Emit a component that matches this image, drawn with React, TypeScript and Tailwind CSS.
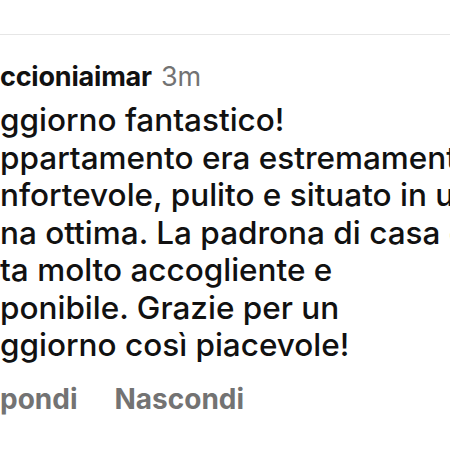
import React from 'react';

const lines = [
  'Soggiorno fantastico!',
  "L'appartamento era estremamente",
  'confortevole, pulito e situato in una',
  'zona ottima. La padrona di casa è',
  'stata molto accogliente e',
  'disponibile. Grazie per un',
  'soggiorno così piacevole!',
];

// the screenshot is cropped on the left, so each line loses its first letters
const cut = [2, 3, 2, 2, 3, 3, 2];

export default function App() {
  return (
    <div
      className="w-[450px] h-[450px] bg-white overflow-hidden text-[#111]"
      style={{ fontFamily: 'Inter, "Noto Sans", sans-serif' }}
    >
      <div className="h-[34px]" />
      <div className="h-px bg-[#e6e6e6]" />
      <div className="pt-[26px]">
        <div className="text-[27px] leading-[32px] whitespace-nowrap">
          <span className="font-bold tracking-[-0.2px]">ccioniaimar</span>
          <span className="text-[#737373] ml-[9px]">3m</span>
        </div>
        <div className="mt-[8px] text-[31.5px] leading-[37.5px] font-medium">
          {lines.map((l, i) => (
            <div key={i} className="whitespace-nowrap">
              {l.slice(cut[i])}
            </div>
          ))}
        </div>
        <div className="flex gap-[37px] mt-[18px] text-[28px] leading-[34px] font-bold text-[#737373] whitespace-nowrap">
          <span>pondi</span>
          <span>Nascondi</span>
        </div>
      </div>
    </div>
  );
}
